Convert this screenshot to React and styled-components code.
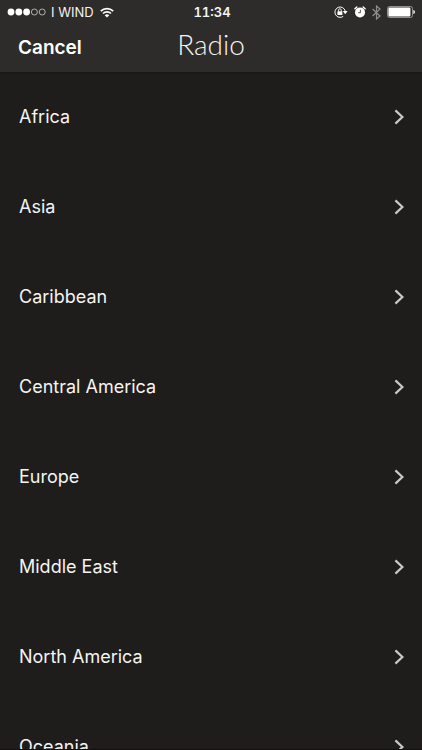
import React from "react";
import styled, { createGlobalStyle } from "styled-components";

const regions = [
  "Africa",
  "Asia",
  "Caribbean",
  "Central America",
  "Europe",
  "Middle East",
  "North America",
  "Oceania",
];

const SignalDots = () => (
  <svg width="40" height="8" viewBox="0 0 40 8" aria-hidden="true">
    <circle cx="4" cy="4" r="3.4" fill="#fff" />
    <circle cx="11.8" cy="4" r="3.4" fill="#fff" />
    <circle cx="19.6" cy="4" r="3.4" fill="#fff" />
    <circle cx="27.4" cy="4" r="3" fill="none" stroke="#d0d0d0" strokeWidth="0.8" />
    <circle cx="35.2" cy="4" r="3" fill="none" stroke="#d0d0d0" strokeWidth="0.8" />
  </svg>
);

const Wifi = () => (
  <svg width="14" height="11" viewBox="0 0 14 11" aria-hidden="true">
    <g fill="none" stroke="#fff" strokeWidth="1.7">
      <path d="M0.8 4.1a8.8 8.8 0 0 1 12.4 0" />
      <path d="M3 6.5a5.7 5.7 0 0 1 8 0" />
    </g>
    <path d="M7 10.6 4.7 8.3a3.3 3.3 0 0 1 4.6 0z" fill="#fff" />
  </svg>
);

const RotationLock = () => (
  <svg width="14" height="12" viewBox="0 0 14 12" aria-hidden="true">
    <path
      d="M11.2 5A5.2 5.2 0 1 0 9.2 10.4"
      fill="none"
      stroke="#fff"
      strokeWidth="1"
    />
    <path d="M8.8 5h4.8L11.2 8.2z" fill="#fff" />
    <rect x="3.4" y="5.2" width="5" height="3.8" rx="0.4" fill="#fff" />
    <path d="M4.5 5.4V4.2a1.4 1.4 0 0 1 2.8 0v1.2" fill="none" stroke="#fff" strokeWidth="0.9" />
  </svg>
);

const Alarm = () => (
  <svg width="12" height="12" viewBox="0 0 12 12" aria-hidden="true">
    <circle cx="6" cy="6.4" r="5" fill="#fff" />
    <path
      d="M0.9 2.8 2.8 1M11.1 2.8 9.2 1"
      stroke="#fff"
      strokeWidth="1.4"
      strokeLinecap="round"
    />
    <path d="M6.4 3.8v2.9H4.2" fill="none" stroke="#2d2c2a" strokeWidth="0.8" />
  </svg>
);

const Bluetooth = () => (
  <svg width="9" height="15" viewBox="0 0 9 15" aria-hidden="true">
    <path
      d="M0.6 4 8 11 4.5 14V1L8 4 0.6 11"
      fill="none"
      stroke="#8f8e8c"
      strokeWidth="1.2"
    />
  </svg>
);

const Battery = () => (
  <svg width="28" height="12" viewBox="0 0 28 12" aria-hidden="true">
    <rect x="0.5" y="0.5" width="25" height="11" rx="2" fill="none" stroke="#aaa" strokeWidth="0.8" />
    <rect x="1.4" y="1.4" width="22" height="9.2" rx="1" fill="#fff" />
    <path d="M26.4 4c2 .4 2 3.6 0 4z" fill="#fff" />
  </svg>
);

const Chevron = () => (
  <svg width="10" height="16" viewBox="0 0 10 16" aria-hidden="true">
    <path d="M1.4 1.4 8.4 8l-7 6.600" fill="none" stroke="#c9c9c8" strokeWidth="2.2" />
  </svg>
);

export default function App() {
  return (
    <Screen>
      <GlobalStyle />
      <Header>
        <StatusBar>
          <Carrier>
            <SignalDots />
            <span>I WIND</span>
            <Wifi />
          </Carrier>
          <Clock>11:34</Clock>
          <Indicators>
            <RotationLock />
            <Alarm />
            <Bluetooth />
            <Battery />
          </Indicators>
        </StatusBar>
        <NavBar>
          <CancelButton type="button">Cancel</CancelButton>
          <Title>Radio</Title>
        </NavBar>
      </Header>
      <RegionList>
        {regions.map((region) => (
          <li key={region}>
            <RegionButton type="button">
              {region}
              <Chevron />
            </RegionButton>
          </li>
        ))}
      </RegionList>
    </Screen>
  );
}

const GlobalStyle = createGlobalStyle`
  * {
    box-sizing: border-box;
  }
  body {
    margin: 0;
    background: #1e1d1b;
    color: #f4f4f4;
    font-family: Inter, "Liberation Sans", sans-serif;
  }
  svg {
    display: block;
    flex-shrink: 0;
  }
`;

const Screen = styled.div`
  display: flex;
  flex-direction: column;
  height: 100vh;
  overflow: hidden;
  border-bottom: 1px solid #120e0e;
`;

const Header = styled.header`
  flex-shrink: 0;
  background: #2d2c2a;
  box-shadow: 0 2px 0 #1a1918;
`;

const StatusBar = styled.div`
  display: grid;
  grid-template-columns: 1fr auto 1fr;
  align-items: center;
  height: 24px;
  padding: 0 7px;
  font-size: 13px;
  line-height: 16px;
`;

const Carrier = styled.div`
  display: flex;
  align-items: center;
  gap: 4px;

  span {
    margin-right: 2px;
  }
`;

const Clock = styled.time`
  padding-left: 2px;
  font-weight: 600;
  font-variant-numeric: tabular-nums;
`;

const Indicators = styled.div`
  display: flex;
  align-items: center;
  justify-content: flex-end;
  gap: 6px;
`;

const NavBar = styled.div`
  display: grid;
  grid-template-columns: 1fr auto 1fr;
  align-items: center;
  height: 48px;
  padding: 0 18px;
`;

const CancelButton = styled.button`
  justify-self: start;
  padding: 0;
  border: 0;
  background: none;
  color: #fff;
  font: inherit;
  font-size: 19px;
  font-weight: 600;
  line-height: 24px;
  cursor: pointer;
`;

const Title = styled.h1`
  margin: 0;
  padding-bottom: 8px;
  font-family: Lato, "Liberation Sans", sans-serif;
  font-size: 28px;
  font-weight: 300;
  line-height: 32px;
`;

const RegionList = styled.ul`
  flex: 1;
  min-height: 0;
  margin: 0;
  padding: 0;
  overflow-y: auto;
  list-style: none;
  scrollbar-width: none;
`;

const RegionButton = styled.button`
  display: flex;
  align-items: center;
  justify-content: space-between;
  width: 100%;
  height: 90px;
  padding: 0 18px 0 19px;
  border: 0;
  background: none;
  color: inherit;
  font: inherit;
  font-size: 18px;
  line-height: 24px;
  text-align: left;
  cursor: pointer;
`;
